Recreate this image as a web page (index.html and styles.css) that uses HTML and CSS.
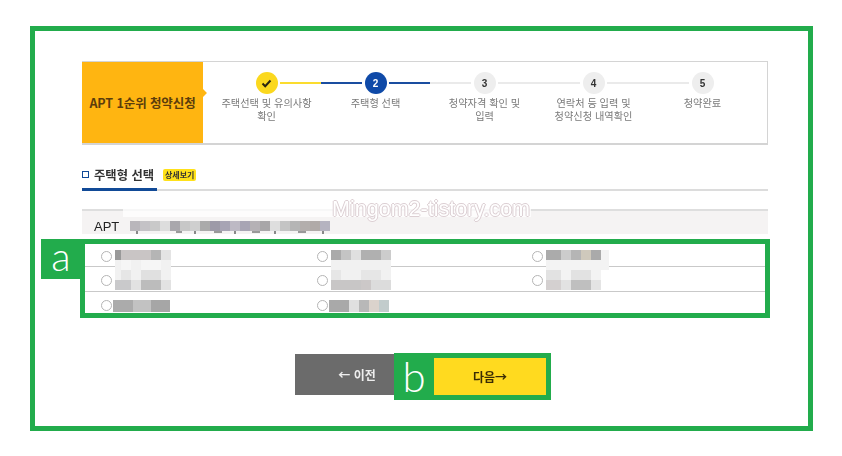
FILE: index.html
```html
<!DOCTYPE html>
<html lang="ko">
<head>
<meta charset="utf-8">
<title>APT 1순위 청약신청</title>
<link rel="stylesheet" href="styles.css">
</head>
<body>
<main class="frame">
  <section class="head soft">
    <h1 class="head-title">APT 1순위 청약신청</h1>
    <ol class="steps">
      <li class="step done">
        <span class="dot"><svg width="11" height="9" viewBox="0 0 11 9"><path d="M1.5 4.5 4.2 7.2 9.5 1.5" fill="none" stroke="#2a2410" stroke-width="2"/></svg></span>
        <span class="step-text">주택선택 및 유의사항<br>확인</span>
      </li>
      <li class="step current">
        <span class="dot">2</span>
        <span class="step-text">주택형 선택</span>
      </li>
      <li class="step">
        <span class="dot">3</span>
        <span class="step-text">청약자격 확인 및<br>입력</span>
      </li>
      <li class="step">
        <span class="dot">4</span>
        <span class="step-text">연락처 등 입력 및<br>청약신청 내역확인</span>
      </li>
      <li class="step">
        <span class="dot">5</span>
        <span class="step-text">청약완료</span>
      </li>
    </ol>
  </section>

  <div class="tabbar soft">
    <h2 class="tab"><span class="tab-box"></span>주택형 선택</h2>
    <span class="badge">상세보기</span>
  </div>

  <section class="apt">
    <div class="apt-head">
      <span class="apt-name soft">APT</span>
      <svg class="apt-mosaic" width="200" height="15" viewBox="0 0 200 15">
        <g fill="#b9b6bb"><rect width="10" height="10"/><rect x="10" width="10" height="10" fill="#c4c2c6"/><rect x="20" width="10" height="10" fill="#c9c9c9"/><rect x="30" width="10" height="10" fill="#ddd"/>
        <rect x="40" width="10" height="10" fill="#a9a7ac"/><rect x="50" width="10" height="10" fill="#c7c7c7"/><rect x="60" width="10" height="10" fill="#cfcfcf"/><rect x="70" width="10" height="10" fill="#aaa"/><rect x="80" width="10" height="10" fill="#9d9aa8"/><rect x="90" width="10" height="10" fill="#a7a4b4"/><rect x="100" width="10" height="10" fill="#bdb9c4"/><rect x="110" width="10" height="10" fill="#a8a5b4"/><rect x="120" width="10" height="10" fill="#b5b1b5"/><rect x="130" width="10" height="10" fill="#a8a6a8"/><rect x="140" width="10" height="10" fill="#dedede"/><rect x="150" width="10" height="10" fill="#c4c4c4"/><rect x="160" width="10" height="10" fill="#b5b5b5"/><rect x="170" width="10" height="10" fill="#b3aeac"/><rect x="180" width="10" height="10" fill="#b0aaa8"/><rect x="190" width="10" height="10" fill="#b5b3c0"/>
        <rect x="6" y="10" width="2" height="3" fill="#888"/><rect x="46" y="10" width="6" height="2" fill="#999"/><rect x="64" y="10" width="2" height="3" fill="#888"/><rect x="84" y="10" width="8" height="2" fill="#999"/><rect x="104" y="10" width="2" height="3" fill="#888"/><rect x="122" y="10" width="8" height="2" fill="#999"/><rect x="144" y="10" width="2" height="3" fill="#888"/><rect x="168" y="10" width="8" height="2" fill="#999"/><rect x="192" y="10" width="2" height="3" fill="#888"/></g>
      </svg>
    </div>
    <p class="watermark">Mingom2-tistory.com</p>

    <div class="annot-a">
      <span class="tag tag-a">a</span>
      <div class="grid-row">
        <div class="cell"><span class="radio"></span>
          <svg class="mosaic" width="56" height="40" viewBox="0 0 56 40">
            <rect width="56" height="40" fill="#f1f1f1"/><rect width="6" height="10" fill="#999"/><rect x="6" width="30" height="10" fill="#c9c5c5"/><rect x="36" width="10" height="10" fill="#b5b5b5"/><rect x="46" width="10" height="10" fill="#e4e4e4"/>
            <rect x="26" y="10" width="20" height="10" fill="#f6f6f6"/><rect x="6" y="10" width="10" height="10" fill="#f6f6f6"/>
            <rect x="26" y="20" width="20" height="10" fill="#e0e0e0"/><rect x="6" y="20" width="10" height="10" fill="#e6e6e6"/>
            <rect y="30" width="16" height="10" fill="#c9c9cb"/><rect x="16" y="30" width="10" height="10" fill="#e2e2e2"/><rect x="26" y="30" width="20" height="10" fill="#bcbcbc"/><rect x="46" y="30" width="10" height="10" fill="#e2e2e2"/>
          </svg>
        </div>
        <div class="cell"><span class="radio"></span>
          <svg class="mosaic" width="60" height="40" viewBox="0 0 60 40">
            <rect width="60" height="40" fill="#f1f1f1"/><rect width="10" height="10" fill="#aaa"/><rect x="10" width="10" height="10" fill="#c4c4c4"/><rect x="20" width="10" height="10" fill="#e0e0e0"/><rect x="30" width="20" height="10" fill="#b0b0b0"/><rect x="50" width="10" height="10" fill="#ccc"/>
            <rect y="20" width="10" height="10" fill="#e6e6e6"/><rect x="30" y="20" width="20" height="10" fill="#e6e6e6"/>
            <rect y="30" width="30" height="10" fill="#c8c6c6"/><rect x="30" y="30" width="10" height="10" fill="#ccc8c8"/><rect x="40" y="30" width="20" height="10" fill="#dcdcdc"/>
          </svg>
        </div>
        <div class="cell"><span class="radio"></span>
          <svg class="mosaic" width="63" height="40" viewBox="0 0 63 40">
            <rect width="63" height="40" fill="#f3f3f3"/><rect width="15" height="10" fill="#ababab"/><rect x="15" width="10" height="10" fill="#ccc"/><rect x="25" width="10" height="10" fill="#b5b5b5"/><rect x="35" width="10" height="10" fill="#cfc9bc"/><rect x="45" width="10" height="10" fill="#aaa"/>
            <rect x="55" y="20" width="8" height="20" fill="#fff"/>
            <rect y="20" width="15" height="10" fill="#e2e2e2"/><rect x="25" y="20" width="20" height="10" fill="#e2e2e2"/>
            <rect y="30" width="15" height="10" fill="#d4d0d0"/><rect x="15" y="30" width="10" height="10" fill="#e2e2e2"/><rect x="25" y="30" width="20" height="10" fill="#bfbfbf"/><rect x="45" y="30" width="10" height="10" fill="#e4e4e4"/>
          </svg>
        </div>
      </div>
      <div class="grid-row">
        <div class="cell"><span class="radio"></span></div>
        <div class="cell"><span class="radio"></span></div>
        <div class="cell"><span class="radio"></span></div>
      </div>
      <div class="grid-row last">
        <div class="cell"><span class="radio"></span>
          <svg class="mosaic mosaic-low" width="57" height="12" viewBox="0 0 57 12">
            <rect width="20" height="12" fill="#ababab"/><rect x="20" width="20" height="12" fill="#c2c2c2"/><rect x="38" width="19" height="12" fill="#a6a6a6"/>
          </svg>
        </div>
        <div class="cell"><span class="radio"></span>
          <svg class="mosaic mosaic-low" width="60" height="12" viewBox="0 0 60 12">
            <rect width="20" height="12" fill="#a9a9a9"/><rect x="20" width="10" height="12" fill="#e0e0e0"/><rect x="30" width="10" height="12" fill="#b8b8b8"/><rect x="40" width="10" height="12" fill="#dbd3cc"/><rect x="50" width="10" height="12" fill="#c2cccc"/>
          </svg>
        </div>
        <div class="cell"></div>
      </div>
    </div>
  </section>

  <div class="actions">
    <button class="btn btn-prev soft" type="button">← 이전</button>
    <div class="annot-b">
      <span class="tag tag-b">b</span>
      <button class="btn btn-next soft" type="button">다음→</button>
    </div>
  </div>
</main>
</body>
</html>
```

FILE: styles.css
```css
* { box-sizing: border-box; }
html, body { margin: 0; padding: 0; background: #fff; }
body {
  width: 842px;
  height: 456px;
  overflow: hidden;
  font-family: "Noto Sans CJK KR", "Noto Sans", sans-serif;
}
.soft { filter: blur(0.5px); }

.frame {
  width: 783px;
  height: 405px;
  margin: 26px 0 0 30px;
  padding: 30px 40px 0 47px;
  border: 5px solid #22ac4c;
}

/* header */
.head {
  display: flex;
  width: 686px;
  height: 84px;
  border: 1px solid #d4d4d4;
  border-bottom-width: 2px;
  border-left: 0;
}
.head-title {
  position: relative;
  flex: none;
  width: 121px;
  margin: 0;
  background: #ffb511;
  color: #5c3d0c;
  font-size: 12.5px;
  font-weight: 700;
  line-height: 82px;
  letter-spacing: -.1px;
  text-align: center;
  white-space: nowrap;
}
.head-title::after {
  content: "";
  position: absolute;
  right: -4px;
  top: 27px;
  width: 8px;
  height: 8px;
  background: #ffb511;
  transform: rotate(45deg) scale(.7);
}
.steps {
  display: flex;
  margin: 0;
  padding: 10px 0 0 9px;
  list-style: none;
}
.step {
  position: relative;
  display: flex;
  flex-direction: column;
  align-items: center;
  width: 109px;
}
.step::before,
.step::after {
  content: "";
  position: absolute;
  top: 10px;
  width: 41px;
  height: 1.5px;
  background: #eaeaea;
}
.step::before { left: 0; }
.step::after { right: 0; }
.step:first-child::before,
.step:last-child::after { display: none; }
.step.done::after { background: #fbdc2e; }
.step.current::before,
.step.current::after { background: #1a4da0; height: 2px; }
.dot {
  display: flex;
  align-items: center;
  justify-content: center;
  width: 22px;
  height: 22px;
  border-radius: 50%;
  background: #eeeeee;
  color: #333;
  font-family: "Liberation Sans", sans-serif;
  font-size: 10px;
  font-weight: 700;
}
.done .dot { background: #fbd81e; }
.current .dot { background: #0f4aa8; color: #fff; }
.step-text {
  margin-top: 2px;
  color: #7a7a7a;
  font-size: 10.2px;
  line-height: 13px;
  text-align: center;
  white-space: nowrap;
}

/* tab */
.tabbar {
  display: flex;
  align-items: center;
  gap: 7px;
  width: 686px;
  height: 46px;
  padding-top: 15px;
  border-bottom: 2px solid #dcdcdc;
  position: relative;
}
.tab {
  display: flex;
  align-items: center;
  gap: 5px;
  width: 74px;
  margin: 0;
  color: #333;
  font-size: 12.3px;
  font-weight: 700;
  white-space: nowrap;
}
.tabbar::after {
  content: "";
  position: absolute;
  left: 0;
  bottom: -2px;
  width: 75px;
  height: 3px;
  background: #114a97;
}
.tab-box {
  flex: none;
  width: 7px;
  height: 7px;
  border: 1.5px solid #114a97;
}
.badge {
  padding: 0 2px;
  border-radius: 2px;
  background: #ffe11a;
  color: #333;
  font-size: 8px;
  font-weight: 700;
  line-height: 12px;
  white-space: nowrap;
}

/* apartment list */
.apt {
  position: relative;
  width: 686px;
  margin-top: 18px;
}
.apt-head {
  display: flex;
  align-items: flex-start;
  height: 25px;
  padding: 10px 0 0 12px;
  border-top: 2px solid #dedede;
  background: #f5f3f3;
}
.apt-name {
  color: #222;
  font-family: "Liberation Sans", sans-serif;
  font-size: 13px;
  line-height: 12px;
  width: 36px;
}
.apt-mosaic { display: block; }
.watermark {
  position: absolute;
  left: 41px;
  top: -7px;
  width: 408px;
  height: 15px;
  margin: 0;
  padding-right: 1px;
  background: rgba(255, 255, 255, .75);
  color: #fff;
  font-family: "Liberation Sans", sans-serif;
  font-size: 21.5px;
  line-height: 15px;
  text-align: right;
  text-shadow: 1px 0 0 #dccfd3, -1px 0 0 #dccfd3, 0 1px 0 #dccfd3, 0 -1px 0 #dccfd3;
  white-space: nowrap;
}

.annot-a {
  position: relative;
  width: 690px;
  height: 79px;
  margin: 5px 0 0 -2px;
  border: 5px solid #22ac4c;
  background: #fff;
}
.tag {
  display: flex;
  align-items: center;
  justify-content: center;
  background: #22ac4c;
  color: #fff;
  font-family: "Lato", "Noto Sans", sans-serif;
  font-weight: 300;
}
.tag-a {
  position: absolute;
  left: -44px;
  top: -5px;
  width: 40px;
  height: 40px;
  font-size: 40px;
  line-height: 40px;
  padding-bottom: 6px;
}
.grid-row {
  display: grid;
  grid-template-columns: repeat(3, 215.5px);
  height: 25px;
  border-bottom: 1px solid #c9c9c9;
}
.grid-row:first-of-type { height: 23px; }
.grid-row.last { height: 21px; border-bottom: 0; }
.cell {
  position: relative;
  display: flex;
  align-items: center;
  padding: 3px 0 0 16px;
}
.grid-row.last .cell { padding-top: 5px; }
.radio {
  flex: none;
  width: 11px;
  height: 11px;
  border: 1px solid #b5b5b5;
  border-radius: 50%;
  background: #fff;
}
.mosaic {
  position: absolute;
  left: 30px;
  top: 6px;
  z-index: 1;
}
.mosaic-low {
  left: 28px;
  top: 8px;
  height: 12px;
}

/* actions */
.actions {
  display: flex;
  align-items: flex-start;
  margin: 35px 0 0 213px;
}
.btn {
  display: block;
  margin: 0;
  border: 0;
  border-radius: 0;
  font-family: "Noto Sans CJK KR", "Noto Sans", sans-serif;
  font-size: 12px;
  font-weight: 700;
  white-space: nowrap;
}
.btn-prev {
  width: 99px;
  height: 41px;
  margin-top: 1px;
  padding: 0 0 0 25px;
  background: #6b6b6b;
  color: #eee;
}
.annot-b {
  display: flex;
  width: 157px;
  height: 47px;
  padding: 5px 5px 5px 0;
  background: #22ac4c;
}
.tag-b {
  flex: none;
  width: 40px;
  height: 37px;
  font-size: 42px;
  line-height: 37px;
}
.btn-next {
  width: 112px;
  height: 37px;
  background: #ffda1f;
  color: #3a2c05;
}
```
